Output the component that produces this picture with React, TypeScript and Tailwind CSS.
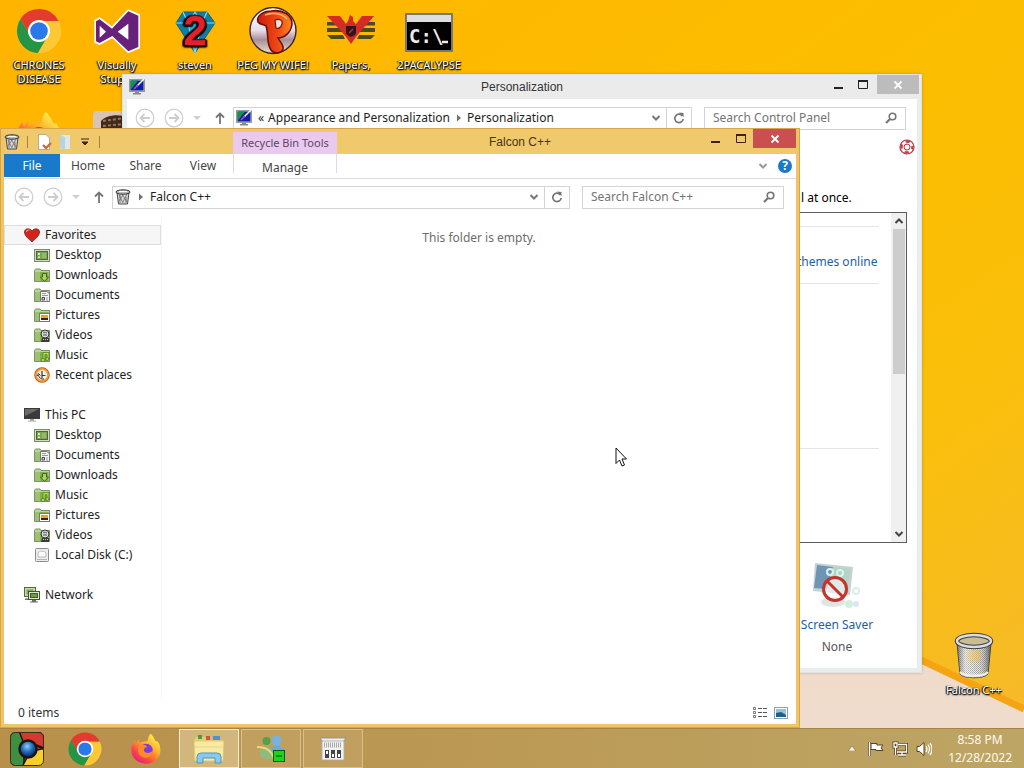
import type { ReactNode } from "react";

type IconProps = { className?: string };

/* ---------- Brand and desktop icons ---------- */

function Chrome({ className = "size-12" }: IconProps) {
  return (
    <svg viewBox="0 0 48 48" className={className} aria-hidden="true">
      <path d="M24 14H43.6A22 22 0 0 1 22.86 45.97L32.66 29Z" fill="#fcc934" />
      <path d="M5.54 12.03A22 22 0 0 0 22.86 45.97L32.66 29 24 24 15.34 29Z" fill="#269445" />
      <path d="M5.54 12.03A22 22 0 0 1 43.6 14H24L15.34 29Z" fill="#e33b2e" />
      <circle cx="24" cy="24" r="11" fill="#fff" />
      <circle cx="24" cy="24" r="8.8" fill="#2a79ea" />
    </svg>
  );
}

function VisualStudio() {
  return (
    <svg viewBox="0 0 144 144" className="size-12" aria-hidden="true">
      <path d="M105 7 141 22V124L105 139 58 94 20 114 4 107V39L20 31 57 58Z" fill="#fff" />
      <path d="M106 13 136 26V120L106 133 58 87 20 108 9 103V43L20 37 57 65Z" fill="#68217a" />
      <path d="M106 50V98L74 74ZM20 56 39 74 20 92Z" fill="#fff" />
    </svg>
  );
}

function Gem() {
  return (
    <svg viewBox="0 0 48 48" className="size-12" aria-hidden="true">
      <path d="M12 5H36L44 16 24 46 5 16Z" fill="#0f7fa8" stroke="#155e75" strokeWidth="1" />
      <path d="M12 5 17 16 24 5 31 16 36 5M5 16H44M17 16 24 46 31 16" stroke="#7fe0f2" strokeWidth="1.2" fill="none" />
      <path d="M17 16H31L24 34Z" fill="#25b6e0" />
      <text
        x="24"
        y="38"
        textAnchor="middle"
        fontSize="42"
        fontWeight="700"
        fontFamily="Liberation Sans, sans-serif"
        fill="#e3202b"
        stroke="#7d0912"
        strokeWidth="2.4"
        paintOrder="stroke"
      >
        2
      </text>
    </svg>
  );
}

function Peggle() {
  return (
    <svg viewBox="0 0 48 48" className="size-12" aria-hidden="true">
      <defs>
        <linearGradient id="peg-ball" x1="0" y1="0" x2="0" y2="1">
          <stop offset="0" stopColor="#fff" />
          <stop offset=".5" stopColor="#e6dcea" />
          <stop offset=".7" stopColor="#a98f96" />
          <stop offset="1" stopColor="#e8e2c8" />
        </linearGradient>
        <linearGradient id="peg-p" x1="0" y1="0" x2="1" y2="0">
          <stop offset="0" stopColor="#cf1c10" />
          <stop offset=".6" stopColor="#ef4a14" />
          <stop offset="1" stopColor="#ff8a1c" />
        </linearGradient>
      </defs>
      <circle cx="24" cy="23.500" r="23" fill="url(#peg-ball)" stroke="#43222b" strokeWidth="1.4" />
      <path
        d="M9 15C7 9 14 4 22 4 34 2 43 8 43 17 42 26 35 31 29 31 31 35 35 38 34 42 32 47 25 47 22 43 17 36 20 27 17 19 14 17 11 18 9 15Z"
        fill="url(#peg-p)"
        stroke="#6b1006"
        strokeWidth="1.6"
      />
      <path d="M26 13C31 11 34 14 33 17 32 21 29 22 27 21Z" fill="#eee2dc" stroke="#7c1508" strokeWidth="1.2" />
      <path d="M16 8C23 5 33 6 38 12" stroke="#ffb169" strokeWidth="1.6" fill="none" />
    </svg>
  );
}

function Eagle() {
  return (
    <svg viewBox="0 0 48 48" className="size-12" aria-hidden="true">
      <g fill="#4f4a1e">
        <path d="M0 15H12L15 18.500H0ZM0 21H15L17 25H0ZM0 28H16L18 32H4Z" />
        <path d="M48 15H36L33 18.500H48ZM48 21H33L31 25H48ZM48 28H32L30 32H44Z" />
      </g>
      <path
        d="M0 9H13L19 17 21 14 23 8 26 10 26 14 29 17 35 9H47L33 25 29 30 24 37 19 30 15 25Z"
        fill="#d62a27"
      />
      <path d="M19 19H29V25C29 28 26 29 24 30 22 29 19 28 19 25Z" fill="#2c1714" />
      <path d="M22 26 26 22" stroke="#d62a27" strokeWidth="1.5" />
    </svg>
  );
}

function CommandPrompt() {
  return (
    <svg viewBox="0 0 48 48" className="size-12" aria-hidden="true">
      <rect x="1" y="7" width="46" height="37" fill="#000" stroke="#777" strokeWidth="2" />
      <rect x="2" y="8" width="44" height="7" fill="#dedede" />
      <text x="4" y="36" fontSize="19" fontWeight="700" fontFamily="DejaVu Sans Mono, monospace" fill="#ececec">
        C:\
      </text>
      <path d="M37 35H43" stroke="#ececec" strokeWidth="2.500" />
    </svg>
  );
}

function Firefox({ className = "size-12" }: IconProps) {
  return (
    <svg viewBox="0 0 48 48" className={className} aria-hidden="true">
      <defs>
        <linearGradient id="fox" x1=".85" y1=".1" x2=".2" y2="1">
          <stop offset="0" stopColor="#fff14c" />
          <stop offset=".4" stopColor="#ffa32a" />
          <stop offset=".7" stopColor="#ff4a42" />
          <stop offset="1" stopColor="#e31587" />
        </linearGradient>
      </defs>
      <path
        d="M31 1C36 6 37 9 38 12 40 12 41 14 41 12 46 19 48 29 42 37 37 44 30 47 23 46 10 45 2 36 2 25 2 19 5 15 7 11L9 16 13 9 14 15C19 12 24 14 27 11 27 7 28 4 31 1Z"
        fill="url(#fox)"
      />
      <circle cx="24" cy="26" r="10" fill="#7a3fdb" />
      <path d="M13 19C18 16 24 17 26 21 22 22 20 24 21 27 24 31 31 31 34 26 34 34 28 38 22 37 15 36 11 30 12 24Z" fill="#ff8a2b" />
    </svg>
  );
}

function PortraitTile() {
  return (
    <svg viewBox="0 0 48 48" className="size-12" aria-hidden="true">
      <rect width="48" height="48" rx="4" fill="#d9c3b8" />
      <path d="M8 10C14 3 30 2 38 9V30H8Z" fill="#3d2a25" />
      <path d="M10 10 32 7M10 15 32 13" stroke="#a0763c" strokeWidth="2" strokeDasharray="3 2" />
      <path d="M12 18H32V36H12Z" fill="#b5643b" />
    </svg>
  );
}

function TrashCan({ className = "size-12" }: IconProps) {
  return (
    <svg viewBox="0 0 48 48" className={className} aria-hidden="true">
      <defs>
        <pattern id="mesh" width="2" height="2" patternUnits="userSpaceOnUse">
          <rect width="2" height="2" fill="#e3e3e0" />
          <rect width="1" height="1" fill="#777" />
          <rect x="1" y="1" width="1" height="1" fill="#8b8b88" />
        </pattern>
        <linearGradient id="can-shade">
          <stop offset="0" stopColor="#555" stopOpacity=".7" />
          <stop offset=".25" stopColor="#fff" stopOpacity=".5" />
          <stop offset=".6" stopColor="#fff" stopOpacity=".25" />
          <stop offset="1" stopColor="#444" stopOpacity=".8" />
        </linearGradient>
      </defs>
      <path d="M7 11 10 42C14 47 34 47 38 42L41 11Z" fill="url(#mesh)" stroke="#3c3c3c" strokeWidth="1" />
      <path d="M17 18H31V28C27 31 21 31 17 28Z" fill="#e6a91c" opacity=".6" />
      <path d="M7 11 10 42C14 47 34 47 38 42L41 11Z" fill="url(#can-shade)" />
      <path d="M10 40C14 45 34 45 38 40" stroke="#eee" strokeWidth="2.500" fill="none" />
      <ellipse cx="24" cy="9" rx="17" ry="6" fill="#c9bd96" stroke="#3c3c3c" strokeWidth="4.500" />
      <ellipse cx="24" cy="9" rx="17" ry="6" fill="none" stroke="#dcdcdc" strokeWidth="2.500" />
    </svg>
  );
}

/* ---------- Small icons ---------- */

function SmallTrash() {
  return (
    <svg viewBox="0 0 16 16" className="size-4 shrink-0" aria-hidden="true">
      <path d="M2 3.500 3.500 15H12.500L14 3.500Z" fill="#d6d6d6" stroke="#4a4a4a" />
      <path d="M4 6 8 14M7 5 12 13M12 5 8 13M8 6 4 12M11 8V14M5 5V14" stroke="#6c6c6c" strokeWidth=".8" />
      <ellipse cx="8" cy="3" rx="7" ry="2.200" fill="#bdbdbd" stroke="#333" />
      <path d="M4 2.500H12" stroke="#fff" />
    </svg>
  );
}

function MonitorBrush() {
  return (
    <svg viewBox="0 0 16 16" className="size-4 shrink-0" aria-hidden="true">
      <rect x="0.500" y="0.500" width="15" height="12" fill="#ccc" stroke="#999" />
      <rect x="1.500" y="1.500" width="13" height="10" fill="#0b1fa8" />
      <path d="M1.500 1.500H9L1.500 11Z" fill="#15924a" />
      <path d="M15 0 8 7" stroke="#fff" strokeWidth="1.500" />
      <path d="M9 6 5 10" stroke="#d83cc0" strokeWidth="1.500" />
      <path d="M6 13H10V14H12V15.500H4V14H6Z" fill="#888" />
    </svg>
  );
}

function ArrowCircle({ flip = false }: { flip?: boolean }) {
  return (
    <svg viewBox="0 0 20 20" className={`size-5 text-[#cdcdcd] ${flip ? "-scale-x-100" : ""}`} aria-hidden="true">
      <circle cx="10" cy="10" r="8.800" fill="none" stroke="currentColor" strokeWidth="1.200" />
      <path d="M15 10H6M9.500 6 5.500 10 9.500 14" fill="none" stroke="currentColor" strokeWidth="1.800" />
    </svg>
  );
}

function UpArrow() {
  return (
    <svg viewBox="0 0 12 14" className="h-3.5 w-3" aria-hidden="true">
      <path d="M6 13V2M2 6.500 6 2.500 10 6.500" fill="none" stroke="#757575" strokeWidth="1.800" />
    </svg>
  );
}

function Chevron({ className = "text-[#777]", up = false }: { className?: string; up?: boolean }) {
  return (
    <svg viewBox="0 0 10 8" className={`h-2 w-2.5 ${up ? "rotate-180" : ""} ${className}`} aria-hidden="true">
      <path d="M1.500 2 5 5.500 8.500 2" fill="none" stroke="currentColor" strokeWidth="2" />
    </svg>
  );
}

function Refresh() {
  return (
    <svg viewBox="0 0 12 12" className="size-3" aria-hidden="true">
      <path d="M9.500 4A4.200 4.200 0 1 0 10.200 7" fill="none" stroke="#747474" strokeWidth="1.700" />
      <path d="M6 0.500 10.500 1V5.200Z" fill="#747474" />
    </svg>
  );
}

function Magnifier() {
  return (
    <svg viewBox="0 0 12 12" className="size-3" aria-hidden="true">
      <circle cx="7.500" cy="4.500" r="3.300" fill="none" stroke="#757575" strokeWidth="1.600" />
      <path d="M5 7 1 11" stroke="#757575" strokeWidth="2.200" />
    </svg>
  );
}

function Caret() {
  return (
    <svg viewBox="0 0 5 8" className="h-2 w-[5px] shrink-0" aria-hidden="true">
      <path d="M1 0.500 5 4 1 7.500Z" fill="#707070" />
    </svg>
  );
}

function Minimize() {
  return (
    <svg viewBox="0 0 12 12" className="size-3" aria-hidden="true">
      <path d="M1 9H10" stroke="currentColor" strokeWidth="2" />
    </svg>
  );
}

function Maximize() {
  return (
    <svg viewBox="0 0 12 12" className="size-3" aria-hidden="true">
      <path d="M1.500 2V9.500H10.500V2" fill="none" stroke="currentColor" />
      <path d="M1 2H11" stroke="currentColor" strokeWidth="2" />
    </svg>
  );
}

function CloseX() {
  return (
    <svg viewBox="0 0 10 10" className="size-2.5" aria-hidden="true">
      <path d="M1.500 1.500 8.500 8.500M8.500 1.500 1.500 8.500" stroke="#fff" strokeWidth="1.800" />
    </svg>
  );
}

function Folder({ children }: { children: ReactNode }) {
  return (
    <svg viewBox="0 0 16 16" className="size-4 shrink-0" aria-hidden="true">
      <path d="M0.500 14.500V3.500L1.500 2H6L7 3.500H15.500V14.500Z" fill="#b9d59a" stroke="#7b8f68" />
      <path d="M2 5H14.500V14H1Z" fill="#83ae50" />
      <path d="M1 5H6V14H1Z" fill="#9cc16f" />
      {children}
    </svg>
  );
}

const icons = {
  heart: (
    <svg viewBox="0 0 16 16" className="size-4 shrink-0" aria-hidden="true">
      <path d="M8 15C5 12 .5 9 .5 5 .5 1.500 5.500 .5 8 4 10.500 .5 15.500 1.500 15.500 5 15.500 9 11 12 8 15Z" fill="#d5231c" stroke="#6d2219" strokeWidth=".8" />
      <path d="M2.500 5C2.500 3.500 4 2.500 5.500 3.300" stroke="#ff9d8c" strokeWidth="1.200" fill="none" />
    </svg>
  ),
  desktop: (
    <svg viewBox="0 0 16 16" className="size-4 shrink-0" aria-hidden="true">
      <rect x=".5" y="2.500" width="15" height="12" fill="#cfdcbd" stroke="#7b8a6a" />
      <rect x="2.500" y="4.500" width="11" height="8" fill="#7da456" stroke="#4b6938" />
      <path d="M4 6H6V8H4ZM4 9.500H6V11H4Z" fill="#d9efb8" />
      <path d="M8 6H12V11H8Z" fill="#93bb62" />
    </svg>
  ),
  downloads: (
    <Folder>
      <path d="M8.500 6.500H12.500V10H14.500L10.500 14.500 6.500 10H8.500Z" fill="#a6d65a" stroke="#3f6420" />
    </Folder>
  ),
  documents: (
    <Folder>
      <path d="M6.500 4.500H13L15.500 7V14.500H6.500Z" fill="#f3f3f3" stroke="#777" />
      <path d="M8 6.500H12M8 8.500H14" stroke="#999" />
      <path d="M8 10.500H10.500V13H8Z" fill="#ddd" stroke="#444" />
      <path d="M12 11H14M12 13H14" stroke="#999" />
    </Folder>
  ),
  pictures: (
    <Folder>
      <rect x="5.500" y="6.500" width="10" height="8" fill="#fff" stroke="#777" />
      <rect x="7" y="8" width="7" height="5" fill="#f1a02c" />
      <path d="M7 11H14V13H7Z" fill="#3a2413" />
    </Folder>
  ),
  videos: (
    <Folder>
      <circle cx="11" cy="7" r="4" fill="#ddd" stroke="#333" />
      <path d="M9.500 5.500H10.500M11.500 5.500H12.500M9.500 8H10.500M11.500 8H12.500" stroke="#222" strokeWidth="1.300" />
      <path d="M8 11H15V15H7Z" fill="#3a3a3a" />
      <path d="M9 12.500H14" stroke="#ccc" strokeDasharray="1 1" />
    </Folder>
  ),
  music: (
    <Folder>
      <path d="M10 13V6.500H14V12" fill="none" stroke="#3d6a16" strokeWidth="2.600" />
      <path d="M10 13V6.500H14V12" fill="none" stroke="#b7ea52" strokeWidth="1.300" />
      <ellipse cx="9" cy="13" rx="2" ry="1.500" fill="#b7ea52" stroke="#3d6a16" strokeWidth=".7" />
      <ellipse cx="13.300" cy="12" rx="1.700" ry="1.400" fill="#b7ea52" stroke="#3d6a16" strokeWidth=".7" />
    </Folder>
  ),
  recent: (
    <svg viewBox="0 0 16 16" className="size-4 shrink-0" aria-hidden="true">
      <circle cx="8" cy="8" r="7" fill="#fff" stroke="#a8561a" strokeWidth="1.500" />
      <circle cx="8" cy="8" r="6" fill="#f7f3ea" stroke="#f39a34" strokeWidth="1.800" />
      <path d="M8 4V8.500H11.500M8 8.500V11" stroke="#333" strokeWidth="1.200" fill="none" />
      <path d="M10 12A4.500 4.500 0 0 1 4.500 8M3 9 4.500 6.500 6.500 8.500" stroke="#333" fill="none" />
    </svg>
  ),
  pc: (
    <svg viewBox="0 0 16 16" className="size-4 shrink-0" aria-hidden="true">
      <rect y="1" width="16" height="11" fill="#3a3a3a" />
      <path d="M1 2H15L1 9Z" fill="#6b6b6b" />
      <path d="M6 12H10V13.500H12V14.500H4V13.500H6Z" fill="#aaa" />
    </svg>
  ),
  disk: (
    <svg viewBox="0 0 16 16" className="size-4 shrink-0" aria-hidden="true">
      <rect x="1.500" y="1.500" width="13" height="13" rx="1" fill="#ededed" stroke="#8c8c8c" />
      <path d="M4 10V6C5 3.500 11 3.500 12 6V10Z" fill="#fafafa" stroke="#bcbcbc" />
      <path d="M3 12.500H13" stroke="#b5b5b5" />
    </svg>
  ),
  network: (
    <svg viewBox="0 0 16 16" className="size-4 shrink-0" aria-hidden="true">
      <rect x=".5" y=".5" width="11" height="9" fill="#c9d8b4" stroke="#59683f" />
      <rect x="2.500" y="2.500" width="7" height="5" fill="#7fa552" />
      <rect x="4.500" y="4.500" width="11" height="8" fill="#dfe8d0" stroke="#45552f" />
      <rect x="6.500" y="6.500" width="7" height="4" fill="#6f9c3d" stroke="#3f5b2e" />
      <path d="M8 13H12V14.500H14V15.500H6V14.500H8ZM1 11.500H4V13H1Z" fill="#68755a" />
    </svg>
  ),
};

/* ---------- Shared pieces ---------- */

function AddressBar({ icon, children, search }: { icon: ReactNode; children: ReactNode; search: string }) {
  return (
    <div className="flex h-6 items-center text-xs text-[#1e1e1e]">
      <button aria-label="Back"><ArrowCircle /></button>
      <button aria-label="Forward" className="ml-[9px]"><ArrowCircle flip /></button>
      <button aria-label="Recent locations" className="ml-2 flex w-2.5 justify-center">
        <svg viewBox="0 0 8 4" className="h-1 w-2" aria-hidden="true"><path d="M0 0H8L4 4Z" fill="#cfcfcf" /></svg>
      </button>
      <button aria-label="Up" className="ml-3"><UpArrow /></button>
      <div className="ml-[7px] flex h-[23px] min-w-0 flex-1 items-center border border-[#d4d4d4] bg-white pl-0.5">
        {icon}
        <div className="flex min-w-0 flex-1 items-center whitespace-nowrap">{children}</div>
        <button aria-label="Previous locations" className="flex w-5 shrink-0 justify-center"><Chevron /></button>
        <button aria-label="Refresh" className="flex h-full w-[25px] shrink-0 items-center justify-center border-l border-[#d4d4d4]"><Refresh /></button>
      </div>
      <label className="ml-3 flex h-[23px] w-[202px] items-center border border-[#d4d4d4] bg-white px-2">
        <input aria-label={search} placeholder={search} className="min-w-0 flex-1 bg-transparent outline-none placeholder:text-[#747474]" />
        <Magnifier />
      </label>
    </div>
  );
}

function DesktopIcon({ icon, label }: { icon: ReactNode; label: string }) {
  return (
    <a href="#open" className="flex h-[104px] w-[78px] flex-col items-center pt-[7px] text-center text-[11px] leading-[14px] text-white [text-shadow:1px_1px_1px_#000,0_1px_2px_#000,-1px_0_1px_#000]">
      {icon}
      <span className="mt-[3px] whitespace-pre">{label}</span>
    </a>
  );
}

type Item = { icon: ReactNode; label: string };

const favorites: Item[] = [
  { icon: icons.desktop, label: "Desktop" },
  { icon: icons.downloads, label: "Downloads" },
  { icon: icons.documents, label: "Documents" },
  { icon: icons.pictures, label: "Pictures" },
  { icon: icons.videos, label: "Videos" },
  { icon: icons.music, label: "Music" },
  { icon: icons.recent, label: "Recent places" },
];

const thisPc: Item[] = [
  { icon: icons.desktop, label: "Desktop" },
  { icon: icons.documents, label: "Documents" },
  { icon: icons.downloads, label: "Downloads" },
  { icon: icons.music, label: "Music" },
  { icon: icons.pictures, label: "Pictures" },
  { icon: icons.videos, label: "Videos" },
  { icon: icons.disk, label: "Local Disk (C:)" },
];

function NavGroup({ icon, label, items, active = false }: Item & { items: Item[]; active?: boolean }) {
  return (
    <section>
      <a href="#group" className={`flex h-5 items-center gap-[5px] border pl-[19px] ${active ? "border-[#dedede] bg-[#f6f6f6]" : "border-transparent"}`}>
        {icon}
        {label}
      </a>
      <ul>
        {items.map((item) => (
          <li key={item.label}>
            <a href="#item" className="flex h-5 items-center gap-[5px] pl-[30px]">
              {item.icon}
              {item.label}
            </a>
          </li>
        ))}
      </ul>
    </section>
  );
}

/* ---------- Windows ---------- */

function PersonalizationWindow() {
  return (
    <section aria-label="Personalization" className="absolute bottom-[55px] left-[122px] right-[102px] top-[74px] flex flex-col border border-[#dfe3e4] bg-[#e9edee] shadow-[0_0_3px_#0003]">
      <header className="grid h-6 shrink-0 grid-cols-[1fr_auto_1fr] items-center bg-[#ebebeb]">
        <div className="pl-1.5"><MonitorBrush /></div>
        <h1 className="font-['Liberation_Sans',sans-serif] text-[12px] text-[#333]">Personalization</h1>
        <div className="flex h-full items-start justify-end pr-0.5 text-[#222]">
          <button aria-label="Minimize" className="flex h-[19px] w-6 items-center justify-center"><Minimize /></button>
          <button aria-label="Maximize" className="flex h-[19px] w-6 items-center justify-center"><Maximize /></button>
          <button aria-label="Close" className="ml-0.5 flex h-[19px] w-[42px] items-center justify-center bg-[#bcbcbc]"><CloseX /></button>
        </div>
      </header>
      <div className="mx-1 mb-1 flex min-h-0 flex-1 flex-col bg-white">
        <div className="pl-2 pr-[11px] pt-[7px]">
          <AddressBar icon={<MonitorBrush />} search="Search Control Panel">
            <span className="ml-1.5">«</span>
            <span className="ml-1">Appearance and Personalization</span>
            <span className="mx-1.5"><Caret /></span>
            <span>Personalization</span>
          </AddressBar>
        </div>
        <div className="flex min-h-0 flex-1 flex-col items-end pt-[9px]">
          <button aria-label="Help" className="mr-0.5">
            <svg viewBox="0 0 16 16" className="size-4" aria-hidden="true">
              <circle cx="8" cy="8" r="7" fill="#fff" stroke="#b8323c" strokeWidth="1.200" />
              <circle cx="8" cy="8" r="5.500" fill="none" stroke="#c9404a" strokeWidth="2.500" strokeDasharray="4.300 4.300" strokeDashoffset="2" />
              <circle cx="8" cy="8" r="3" fill="#fff" stroke="#b8323c" />
            </svg>
          </button>
          <div className="mr-[10px] mt-[35px] flex min-h-0 w-[110px] flex-1 flex-col text-xs">
            <p className="pl-1 leading-4 text-black">l at once.</p>
            <div className="mt-1.5 flex h-[331px] border border-l-0 border-[#5c5c5c] bg-white">
              <div className="flex flex-1 flex-col pr-3">
                <div className="mt-[13px] flex h-[58px] items-center justify-start whitespace-nowrap border-y border-[#e4e4e4] pt-3.5">
                  <a href="#themes" className="text-[#1a5fa8]">themes online</a>
                </div>
                <div className="h-[165px] border-b border-[#e4e4e4]" />
              </div>
              <div className="flex w-[15px] flex-col items-center bg-[#f0f0f0]">
                <button aria-label="Scroll up" className="flex h-4 items-center"><Chevron up className="text-[#444]" /></button>
                <div className="h-[145px] w-3 bg-[#cdcdcd]" />
                <div className="flex-1" />
                <button aria-label="Scroll down" className="flex h-4 items-center"><Chevron className="text-[#444]" /></button>
              </div>
            </div>
            <div className="flex w-20 flex-col items-center whitespace-nowrap pt-[18px] text-center">
              <svg viewBox="0 0 48 52" className="h-[52px] w-12" aria-hidden="true">
                <path d="M2 2 40 6 37 34 0 30Z" fill="#c3d2d5" />
                <path d="M4 4 20 6 14 28 1 27Z" fill="#6f95b5" />
                <path d="M20 6 37 8 34 30 16 28Z" fill="#b3d3c4" />
                <circle cx="17" cy="11" r="3" fill="none" stroke="#d8f2ec" strokeWidth="2" />
                <circle cx="27" cy="12" r="3" fill="none" stroke="#d8f2ec" strokeWidth="2" />
                <ellipse cx="20" cy="41" rx="12" ry="5" fill="#e0e5e3" />
                <circle cx="43" cy="30" r="3" fill="none" stroke="#d8efec" strokeWidth="2" />
                <circle cx="36" cy="43" r="4" fill="#d4eedd" />
                <circle cx="43" cy="43" r="3" fill="#d9e8f0" />
                <circle cx="22" cy="28" r="11.500" fill="#ffffff90" stroke="#c3342c" strokeWidth="3" />
                <path d="M14 20 30 36" stroke="#c3342c" strokeWidth="3" />
              </svg>
              <a href="#screensaver" className="mt-1 leading-4 text-[#1a5fa8]">Screen Saver</a>
              <span className="mt-1.5 leading-4 text-[#555]">None</span>
            </div>
          </div>
        </div>
      </div>
    </section>
  );
}

function ExplorerWindow() {
  return (
    <section aria-label="Falcon C++" className="absolute bottom-0 left-0 right-56 top-32 flex flex-col border border-[#d9a548] bg-[#f0c568] px-[3px] pb-[3px]">
      <header className="flex h-[25px] shrink-0 items-stretch bg-[#efc96c]">
        <div className="flex w-[229px] shrink-0 items-center">
          <SmallTrash />
          <span className="ml-[7px] h-3 w-px bg-[#a98236]" />
          <button aria-label="Properties" className="ml-2">
            <svg viewBox="0 0 16 16" className="size-4" aria-hidden="true">
              <path d="M2.500 .5H10L13.500 4V15.500H2.500Z" fill="#fff" stroke="#b3aa99" />
              <path d="M7 11 10 14 15 9" stroke="#c86d3a" strokeWidth="2.400" fill="none" />
            </svg>
          </button>
          <button aria-label="New folder" className="ml-1.5">
            <svg viewBox="0 0 16 16" className="size-4" aria-hidden="true">
              <path d="M2 1H12V15H2Z" fill="#dce8ea" />
              <path d="M2 1 7 3V16L2 14Z" fill="#b9d3de" />
            </svg>
          </button>
          <button aria-label="Customize toolbar" className="ml-[7px]">
            <svg viewBox="0 0 8 8" className="size-2" aria-hidden="true">
              <path d="M0 1H8M1 4H7L4 7Z" fill="#3c240a" stroke="#3c240a" />
            </svg>
          </button>
          <span className="ml-2.5 h-3 w-px bg-[#a98236]" />
        </div>
        <div className="mt-[3px] flex w-[104px] shrink-0 items-center justify-center whitespace-nowrap bg-[#e9c9ee] text-[11px] text-[#5b4668]">Recycle Bin Tools</div>
        <h2 className="flex flex-1 items-center justify-center font-['Liberation_Sans',sans-serif] text-[12px] text-[#4a3312]">Falcon C++</h2>
        <div className="flex h-[19px] text-[#3c240a]">
          <button aria-label="Minimize" className="flex w-[25px] items-center justify-center"><Minimize /></button>
          <button aria-label="Maximize" className="flex w-[25px] items-center justify-center"><Maximize /></button>
          <button aria-label="Close" className="flex w-[43px] items-center justify-center bg-[#c9504f]"><CloseX /></button>
        </div>
      </header>
      <div className="flex min-h-0 flex-1 flex-col bg-white text-xs text-[#1e1e1e]">
        <nav className="flex h-[25px] shrink-0 border-b border-[#dcdcdc] text-[#444]">
          <button className="h-[23px] w-14 bg-[#1979ca] text-white">File</button>
          <button className="w-14">Home</button>
          <button className="w-[59px]">Share</button>
          <button className="w-[56px]">View</button>
          <button className="ml-0.5 h-[19px] w-[104px] border-x border-[#e3d6e6] pt-1.5">Manage</button>
          <div className="flex flex-1 items-center justify-end gap-2.5 pr-1">
            <button aria-label="Collapse ribbon"><Chevron className="text-[#999]" /></button>
            <button aria-label="Help" className="flex size-3.5 items-center justify-center rounded-full bg-[#1979ca] text-[12px] font-bold text-white">?</button>
          </div>
        </nav>
        <div className="pb-2 pl-2.5 pr-3 pt-1.5">
          <AddressBar icon={<SmallTrash />} search="Search Falcon C++">
            <span className="mx-[7px]"><Caret /></span>
            <span>Falcon C++</span>
          </AddressBar>
        </div>
        <div className="flex min-h-0 flex-1">
          <aside className="flex w-[158px] shrink-0 flex-col gap-5 border-r border-[#f7f7f7] pt-2">
            <NavGroup icon={icons.heart} label="Favorites" items={favorites} active />
            <NavGroup icon={icons.pc} label="This PC" items={thisPc} />
            <NavGroup icon={icons.network} label="Network" items={[]} />
          </aside>
          <main className="flex-1 pt-[13px] text-center leading-4 text-[#6d6d6d]">This folder is empty.</main>
        </div>
        <footer className="flex h-[23px] shrink-0 items-center justify-between pl-3.5 pr-2">
          <span className="text-[#333]">0 items</span>
          <div className="flex items-center gap-1.5">
            <button aria-label="Details view">
              <svg viewBox="0 0 16 14" className="h-3.5 w-4" aria-hidden="true">
                <path d="M1.500 1.500H3.500V3.500H1.500ZM1.500 5.500H3.500V7.500H1.500ZM1.500 9.500H3.500V11.500H1.500Z" fill="none" stroke="#777" />
                <path d="M6 2.500H15M6 6.500H15M6 10.500H15" stroke="#555" strokeDasharray="4 1" />
              </svg>
            </button>
            <button aria-label="Large icons view">
              <svg viewBox="0 0 14 12" className="h-3 w-3.5" aria-hidden="true">
                <rect x=".5" y=".5" width="13" height="11" fill="#fff" stroke="#8aa0b4" />
                <rect x="2" y="2" width="10" height="8" fill="#8cc4e4" />
                <path d="M2 6 7 5 12 8V10H2Z" fill="#1f5f86" />
              </svg>
            </button>
          </div>
        </footer>
      </div>
    </section>
  );
}

/* ---------- Taskbar ---------- */

function Taskbar() {
  return (
    <footer className="z-10 flex h-10 shrink-0 items-stretch border-t border-[#a98343] bg-linear-to-r from-[#b8904a] via-[#bb9a55] to-[#bda565]">
      <button aria-label="Start" className="flex w-[54px] items-center justify-center">
        <svg viewBox="0 0 34 34" className="size-[34px]" aria-hidden="true">
          <defs>
            <clipPath id="orb"><rect width="34" height="34" rx="5" /></clipPath>
            <radialGradient id="orb-core" cx=".45" cy=".35" r=".6">
              <stop offset="0" stopColor="#8fd0f5" />
              <stop offset=".5" stopColor="#2670c0" />
              <stop offset="1" stopColor="#0b2b66" />
            </radialGradient>
          </defs>
          <g clipPath="url(#orb)" stroke="#1c1510" strokeWidth="1.500">
            <rect width="34" height="34" fill="#d43a31" />
            <path d="M-1-1H9L14 12 14 35H-1Z" fill="#3e8f41" />
            <path d="M12 35 20 20 35 16V35Z" fill="#f6cf2d" />
            <path d="M17 13Q26 12 34 17" fill="none" strokeWidth="2.500" />
            <circle cx="18" cy="17" r="8.500" fill="url(#orb-core)" strokeWidth="2.500" />
          </g>
          <rect x=".5" y=".5" width="33" height="33" rx="5" fill="none" stroke="#3d2c18" />
        </svg>
      </button>
      <button aria-label="Chrome" className="flex w-[62px] items-center justify-center"><Chrome className="size-9" /></button>
      <button aria-label="Firefox" className="flex w-[60px] items-center justify-center"><Firefox className="size-8" /></button>
      <div className="ml-[3px] flex gap-0.5">
        <button aria-label="File Explorer" className="flex w-[60px] items-center justify-center border border-[#f7ecd0] bg-[#d3b67c]">
          <svg viewBox="0 0 32 30" className="h-[30px] w-8" aria-hidden="true">
            <path d="M3 3H12L14 6H30V26H1V6Z" fill="#e7cf72" />
            <path d="M5 1H9V5H5Z" fill="#3fa04a" />
            <path d="M13 2H17V6H13Z" fill="#d0553c" />
            <path d="M20 2H27V6H20Z" fill="#4c93cf" />
            <path d="M1 7H31L30 27H2Z" fill="#f8e9a3" stroke="#dcc068" strokeWidth=".7" />
            <path d="M2 13H30" stroke="#ead584" />
            <path d="M4 29V23Q4 19 8 19H24Q28 19 28 23V29H22V24H10V29Z" fill="#8cc8ea" stroke="#4f97c6" />
          </svg>
        </button>
        <button aria-label="Messenger" className="flex w-[60px] items-center justify-center border border-[#d9bf8d] bg-[#c1a05f]">
          <svg viewBox="0 0 28 28" className="size-7" aria-hidden="true">
            <circle cx="9.500" cy="6" r="4" fill="#55a04a" />
            <circle cx="19.500" cy="5.500" r="5" fill="#77b3de" />
            <path d="M12 20Q11 11 20 11T28 20Z" fill="#6fa9d6" />
            <path d="M3 21Q2 12 9 12T17 22Q10 27 3 21Z" fill="#8dbb80" />
            <path d="M0 12Q14 12 17 24" stroke="#f0d878" strokeWidth="2" fill="none" />
            <rect x="16.500" y="15.500" width="11" height="11" fill="#1dd41d" stroke="#0b5d0b" />
            <path d="M19 21H25" stroke="#0b8d0b" strokeWidth="2" />
          </svg>
        </button>
        <button aria-label="Personalization" className="flex w-[60px] items-center justify-center border border-[#d9bf8d] bg-[#c1a05f]">
          <svg viewBox="0 0 28 24" className="h-6 w-7" aria-hidden="true">
            <path d="M1 1H27L24 5H4Z" fill="#eee" stroke="#888" strokeWidth=".8" />
            <path d="M3 4H25V23H3Z" fill="#f1f1f1" stroke="#aaa" strokeWidth=".8" />
            <path d="M5 8H23" stroke="#a9a9a9" strokeWidth="5" strokeDasharray="1 1" />
            <path d="M6 13H10V21H6ZM12 13H16V21H12ZM18 13H22V21H18Z" fill="#444" />
            <path d="M7 14H9V17H7ZM13 17H15V20H13ZM19 17H21V20H19Z" fill="#fff" />
          </svg>
        </button>
      </div>
      <div className="ml-auto flex items-center pr-3 text-[#fffaf0]">
        <button aria-label="Show hidden icons" className="mr-3">
          <svg viewBox="0 0 8 5" className="h-[5px] w-2" aria-hidden="true"><path d="M0 5 4 0 8 5Z" fill="#fff3e8" stroke="#6b4e24" strokeWidth=".5" /></svg>
        </button>
        <button aria-label="Action center" className="mr-2">
          <svg viewBox="0 0 16 16" className="size-4" aria-hidden="true">
            <path d="M1.500 1V15" stroke="#5b4120" strokeWidth="3" />
            <path d="M3 2.500H9V4H15L13 7 15 9.500H8V8.500H3Z" fill="#fff" stroke="#5b4120" />
            <path d="M1.500 1V15" stroke="#fff" strokeWidth="1.500" />
          </svg>
        </button>
        <button aria-label="Network" className="mr-2">
          <svg viewBox="0 0 16 16" className="size-4" aria-hidden="true">
            <g fill="none" stroke="#5b4120" strokeWidth="3">
              <path d="M6 3.500H14.500V11H5M10 11V14M6 14H14M2 2H5V6H2ZM3.500 6V14" />
            </g>
            <g fill="none" stroke="#fff" strokeWidth="1.300">
              <path d="M6 3.500H14.500V11H5M10 11V14M6 14H14M2 2H5V6H2ZM3.500 6V14" />
            </g>
          </svg>
        </button>
        <button aria-label="Volume" className="mr-4">
          <svg viewBox="0 0 16 16" className="size-4" aria-hidden="true">
            <path d="M1 5.500H3.500L8 1.500V14.500L3.500 10.500H1Z" fill="#fff" stroke="#5b4120" />
            <path d="M10 5Q12 8 10 11M12 3.500Q15 8 12 12.500M14 2Q18 8 14 14" stroke="#fff" strokeWidth="1.200" fill="none" />
          </svg>
        </button>
        <button className="text-center text-xs leading-[18px]">
          8:58 PM
          <br />
          12/28/2022
        </button>
      </div>
    </footer>
  );
}

export default function App() {
  return (
    <div className="flex h-screen flex-col overflow-hidden bg-[#fdb900] font-['Noto_Sans',sans-serif]">
      <div className="relative min-h-0 flex-1">
        <svg viewBox="0 0 1024 728" preserveAspectRatio="none" className="absolute inset-0 size-full" aria-hidden="true">
          <defs>
            <linearGradient id="wall" x1="0" y1="0" x2="1" y2="1">
              <stop offset="0" stopColor="#ffb400" />
              <stop offset=".5" stopColor="#fcbe00" />
              <stop offset=".75" stopColor="#fabf0c" />
              <stop offset="1" stopColor="#f6ba2c" />
            </linearGradient>
            <linearGradient id="sand" x1="0" y1="0" x2="0" y2="1">
              <stop offset="0" stopColor="#f3d9c4" />
              <stop offset="1" stopColor="#efdccd" />
            </linearGradient>
          </defs>
          <rect width="1024" height="728" fill="url(#wall)" />
          <path d="M700 556 1024 710V728H700Z" fill="url(#sand)" />
          <path d="M700 555 1024 709" stroke="#f5a414" strokeWidth="7" />
        </svg>

        <div className="relative grid w-max grid-cols-[repeat(6,78px)]">
          <DesktopIcon icon={<Chrome />} label={"CHRONES\nDISEASE"} />
          <DesktopIcon icon={<VisualStudio />} label={"Visually\nStupid"} />
          <DesktopIcon icon={<Gem />} label="steven" />
          <DesktopIcon icon={<Peggle />} label="PEG MY WIFE!" />
          <DesktopIcon icon={<Eagle />} label="Papers," />
          <DesktopIcon icon={<CommandPrompt />} label="2PACALYPSE" />
          <DesktopIcon icon={<Firefox />} label="" />
          <DesktopIcon icon={<PortraitTile />} label="" />
        </div>

        <div className="absolute -bottom-px right-[11px]">
          <DesktopIcon icon={<TrashCan />} label="Falcon C++" />
        </div>

        <PersonalizationWindow />
        <ExplorerWindow />

        <svg viewBox="0 0 12 20" className="absolute left-[615px] top-[447px] h-5 w-3" aria-hidden="true">
          <path d="M1 1V16.500L4.500 13 7 19 9.500 18 7 12H11.500Z" fill="#fff" stroke="#111" />
        </svg>
      </div>
      <Taskbar />
    </div>
  );
}
